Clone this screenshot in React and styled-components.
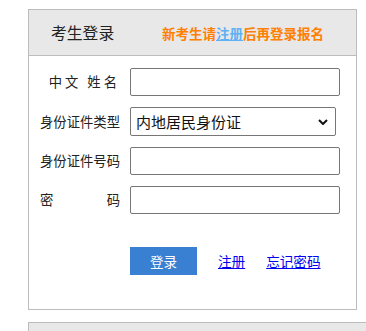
import React from 'react';
import styled, { createGlobalStyle } from 'styled-components';

const GlobalStyle = createGlobalStyle`
  html, body {
    margin: 0;
    padding: 0;
    background: #ffffff;
    overflow: hidden;
  }
  body {
    font-family: "Noto Sans CJK SC", "Noto Sans", sans-serif;
    color: #333;
  }
`;

const Page = styled.div`
  width: 366px;
  height: 331px;
  padding: 9px 0 0 28px;
  box-sizing: border-box;
  overflow: hidden;
`;

const Panel = styled.div`
  width: 329px;
  border: 1px solid #bcbcbc;
  box-sizing: border-box;
  background: #fff;
`;

const Header = styled.div`
  height: 45px;
  background: #e8e8e8;
  border-bottom: 1px solid #bcbcbc;
  display: flex;
  align-items: center;
  padding-left: 22px;
`;

const Title = styled.h3`
  margin: 0;
  font-size: 15.8px;
  font-weight: normal;
  color: #222;
  width: 111px;
  line-height: 20px;
`;

const Notice = styled.span`
  font-size: 13.5px;
  font-weight: bold;
  color: #ff8000;
  line-height: 20px;
  a {
    color: #5fb0f4;
    text-decoration: underline;
  }
`;

const Form = styled.div`
  display: grid;
  grid-template-columns: 80px auto;
  column-gap: 10px;
  row-gap: 11px;
  padding: 12px 0 0 11px;
  align-items: center;
`;

const Label = styled.label`
  font-size: 13.33px;
  line-height: 18px;
  color: #222;
  text-align: right;
  white-space: nowrap;
  letter-spacing: ${(p) => (p.$spaced ? '3px' : '0')};
  ${(p) => p.$justify && `
    display: flex;
    justify-content: space-between;
  `}
`;

const Input = styled.input`
  width: 210px;
  height: 28px;
  box-sizing: border-box;
  border: 1px solid #767676;
  border-radius: 2px;
  padding: 0 4px;
  font-size: 14px;
  font-family: inherit;
  margin: 0;
`;

const SelectWrap = styled.div`
  position: relative;
  width: 206px;
  height: 29px;
`;

const Select = styled.select`
  appearance: none;
  width: 206px;
  height: 29px;
  box-sizing: border-box;
  border: 1px solid #767676;
  border-radius: 2px;
  padding: 0 0 0 5px;
  font-size: 15px;
  font-family: inherit;
  color: #111;
  background: #fff;
  margin: 0;
`;

const Chevron = styled.svg`
  position: absolute;
  right: 8px;
  top: 12px;
  width: 10px;
  height: 6px;
  pointer-events: none;
`;

const Actions = styled.div`
  display: flex;
  align-items: center;
  gap: 21px;
  padding: 33px 0 34px 101px;
`;

const Button = styled.button`
  width: 67px;
  height: 28px;
  border: none;
  background: #3a80d2;
  color: #fff;
  font-size: 13.5px;
  font-family: inherit;
  padding: 0;
  cursor: pointer;
`;

const Link = styled.a`
  font-size: 13.6px;
  color: #0000ee;
  text-decoration: underline;
  line-height: 18px;
`;

const NextPanel = styled.div`
  margin-top: 12px;
  width: 400px;
  height: 20px;
  border: 1px solid #bcbcbc;
  background: #e8e8e8;
`;

export default function App() {
  return (
    <>
      <GlobalStyle />
      <Page>
        <Panel>
          <Header>
            <Title>考生登录</Title>
            <Notice>
              新考生请<a href="#">注册</a>后再登录报名
            </Notice>
          </Header>
          <Form>
            <Label $spaced>中文 姓名</Label>
            <Input type="text" />
            <Label>身份证件类型</Label>
            <SelectWrap>
              <Select defaultValue="1">
                <option value="1">内地居民身份证</option>
              </Select>
              <Chevron viewBox="0 0 10 6">
                <path d="M1 1 L5 5 L9 1" fill="none" stroke="#111" strokeWidth="2" />
              </Chevron>
            </SelectWrap>
            <Label>身份证件号码</Label>
            <Input type="text" />
            <Label $justify>
              <span>密</span>
              <span>码</span>
            </Label>
            <Input type="password" />
          </Form>
          <Actions>
            <Button>登录</Button>
            <Link href="#">注册</Link>
            <Link href="#">忘记密码</Link>
          </Actions>
        </Panel>
        <NextPanel />
      </Page>
    </>
  );
}
